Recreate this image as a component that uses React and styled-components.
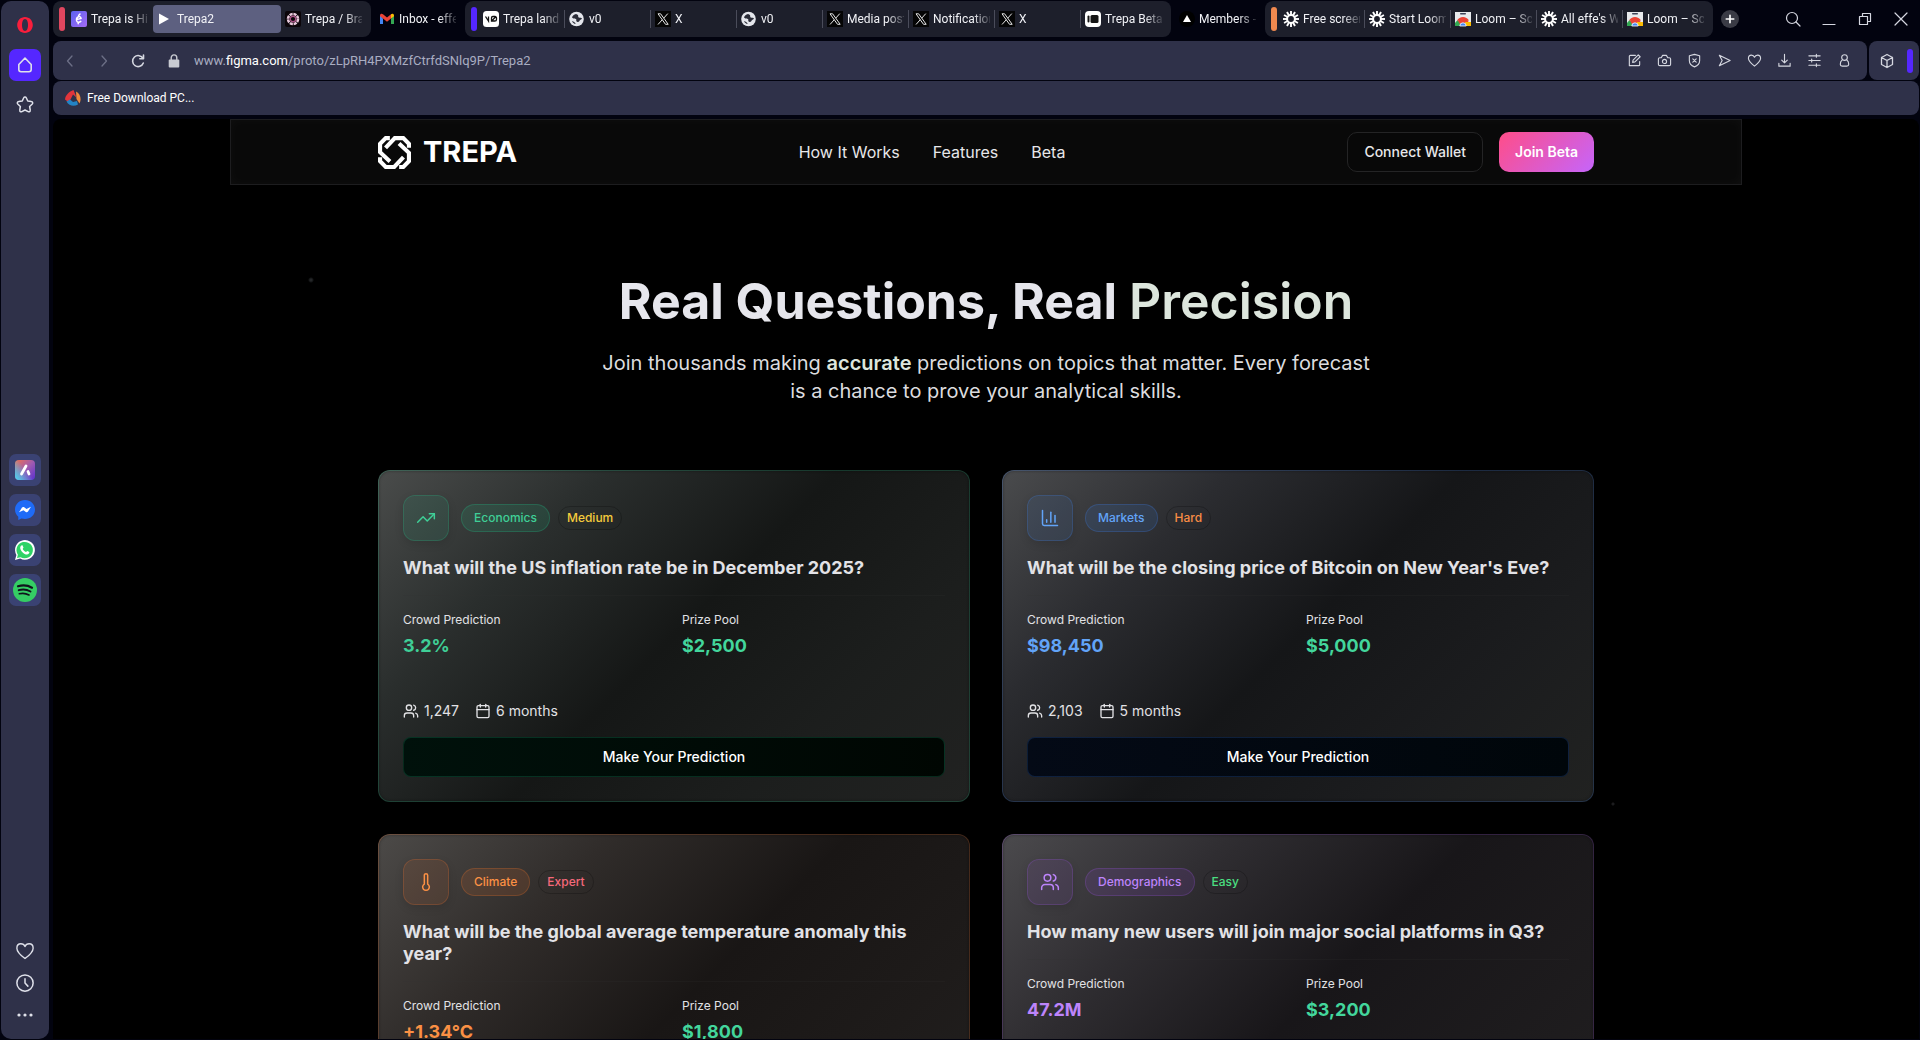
import React from "react";
import styled, { createGlobalStyle, css } from "styled-components";
import {
  Calendar,
  ChartColumn,
  Thermometer,
  TrendingUp,
  Users,
} from "lucide-react";

const GlobalStyle = createGlobalStyle`
  * { box-sizing: border-box; }
  body {
    margin: 0;
    background: #02030f;
    font-family: Inter, "Liberation Sans", sans-serif;
  }
  button { font: inherit; color: inherit; border: 0; padding: 0; background: none; cursor: pointer; }
  a { color: inherit; text-decoration: none; }
  h1, h2, p, dl, dd { margin: 0; }
  svg { display: block; flex: none; }
`;

/* ---------- browser chrome ---------- */

const Window = styled.div`
  display: flex;
  gap: 4px;
  height: 100vh;
  padding: 1px;
  overflow: hidden;
`;

const Sidebar = styled.nav`
  display: flex;
  flex-direction: column;
  align-items: center;
  width: 48px;
  flex: none;
  padding: 8px 0 12px;
  border-radius: 10px;
  background: #2f3149;
  color: #dfe1ea;
`;

const SideGroup = styled.div`
  display: flex;
  flex-direction: column;
  align-items: center;
  gap: 8px;
  margin-top: ${(p) => (p.$push ? "auto" : 0)};
`;

const SideButton = styled.button`
  display: grid;
  place-items: center;
  width: 32px;
  height: ${(p) => (p.$short ? 24 : 32)}px;
  border-radius: 7px;
  background: ${(p) => (p.$active ? "#5527ff" : p.$tile ? "#3a4273" : "none")};
`;

const Main = styled.div`
  display: flex;
  flex-direction: column;
  flex: 1;
  min-width: 0;
  font-family: Roboto, "Noto Sans", sans-serif;
`;

const TabStrip = styled.div`
  display: flex;
  align-items: center;
  gap: 4px;
  height: 36px;
  flex: none;
`;

const TabGroup = styled.div`
  display: flex;
  align-items: center;
  height: 36px;
  flex: none;
  padding: ${(p) => (p.$color ? "0 4px 0 6px" : 0)};
  border-radius: 8px;
  background: ${(p) => (p.$color ? "#1d1f2b" : "none")};
`;

const GroupBar = styled.span`
  width: 6px;
  height: 24px;
  margin-right: 2px;
  border-radius: 3px;
  background: ${(p) => p.$color};
`;

const Tab = styled.button`
  display: flex;
  align-items: center;
  gap: 4px;
  width: 86px;
  height: 18px;
  padding: 0 4px;
  color: #f1f2f6;
  font-size: 12px;
  line-height: 18px;
  text-align: left;
  border-right: 1px solid ${(p) => (p.$divided ? "#4a4c5a" : "transparent")};
  ${(p) =>
    p.$active &&
    css`
      width: 128px;
      height: 28px;
      border-radius: 4px;
      background: #5d6080;
    `}
`;

const TabTitle = styled.span`
  flex: 1;
  min-width: 0;
  overflow: hidden;
  white-space: nowrap;
  mask-image: linear-gradient(to right, #000 70%, transparent 105%);
`;

const NewTab = styled.button`
  display: grid;
  place-items: center;
  width: 18px;
  height: 18px;
  margin-left: 4px;
  border-radius: 50%;
  background: #3a3b45;
  color: #fff;
`;

const WindowControls = styled.div`
  display: flex;
  align-items: center;
  gap: 16px;
  margin-left: auto;
  padding-right: 8px;
  color: #e9eaf2;
`;

const IconButton = styled.button`
  display: grid;
  place-items: center;
  width: 20px;
  height: 20px;
  color: ${(p) => (p.$dim ? "#6c6f86" : "#d5d7e0")};
`;

const BarRow = styled.div`
  display: flex;
  gap: 2px;
  margin-top: 4px;
  flex: none;
`;

const Panel = styled.div`
  display: flex;
  align-items: center;
  height: 39px;
  border-radius: 8px;
  background: #2f3149;
`;

const AddressPanel = styled(Panel)`
  flex: 1;
  min-width: 0;
  padding: 0 13px 0 7px;
`;

const History = styled.div`
  display: flex;
  align-items: center;
  gap: 14px;
  margin-right: 20px;
`;

const Address = styled.div`
  flex: 1;
  min-width: 0;
  margin-left: 14px;
  overflow: hidden;
  white-space: nowrap;
  font-size: 13px;
  line-height: 20px;
  color: #a9adc1;
  outline: 0;
  b { font-weight: 400; color: #fff; }
`;

const Actions = styled.div`
  display: flex;
  align-items: center;
  gap: 10px;
`;

const ExtensionPanel = styled(Panel)`
  width: 50px;
  gap: 10px;
  padding-left: 8px;
`;

const PanelMarker = styled.span`
  width: 6px;
  height: 24px;
  border-radius: 3px;
  background: #5527ff;
`;

const Bookmarks = styled(Panel)`
  height: 34px;
  margin-top: 1px;
  padding: 0 12px;
  flex: none;
`;

const Bookmark = styled.a`
  display: flex;
  align-items: center;
  gap: 6px;
  color: #fff;
  font-size: 12px;
  line-height: 18px;
`;

/* ---------- page ---------- */

const Viewport = styled.div`
  flex: 1;
  min-height: 0;
  margin-top: 4px;
  overflow-y: auto;
  scrollbar-width: none;
  border-radius: 8px 8px 0 0;
  font-family: Inter, "Liberation Sans", sans-serif;
  color: #e7e7ea;
  background: #000;
`;

const Page = styled.div`
  max-width: 1512px;
  margin: 0 auto;
  background:
    radial-gradient(circle at 81px 161px, #242628 1px, transparent 3px),
    radial-gradient(circle at 1383px 685px, #1c1c1e 1px, transparent 2px);
`;

const Header = styled.header`
  height: 66px;
  padding: 0 16px;
  border: 1px solid #1d1d1f;
  background: #090909;
  box-shadow: inset 0 0 12px rgba(255, 255, 255, 0.03);
`;

const Container = styled.div`
  max-width: 1216px;
  margin: 0 auto;
`;

const HeaderRow = styled(Container)`
  display: grid;
  grid-template-columns: 1fr auto 1fr;
  align-items: center;
  height: 100%;
`;

const Brand = styled.a`
  display: flex;
  align-items: center;
  gap: 12px;
  color: #fff;
  font-size: 29px;
  font-weight: 700;
  line-height: 32px;
`;

const Nav = styled.nav`
  display: flex;
  gap: 33px;
  margin-right: 108px;
  font-size: 16px;
  line-height: 24px;
`;

const HeaderActions = styled.div`
  display: flex;
  justify-content: flex-end;
  gap: 16px;
`;

const HeaderButton = styled.button`
  height: 40px;
  padding: 0 16px;
  border-radius: 10px;
  font-size: 14px;
  font-weight: 500;
  line-height: 20px;
  white-space: nowrap;
  ${(p) =>
    p.$primary
      ? css`
          color: #fff;
          font-weight: 600;
          background: linear-gradient(135deg, #ff4d88, #c565fb);
        `
      : css`
          border: 1px solid #242425;
          background: #080808;
        `}
`;

const Hero = styled.section`
  padding: 84px 16px 65px;
  text-align: center;
`;

const HeroTitle = styled.h1`
  font-size: 50px;
  font-weight: 700;
  line-height: 64px;
  color: #e6e6ec;
  span { font-weight: 600; color: #dde6dd; }
`;

const HeroText = styled.p`
  max-width: 780px;
  margin: 16px auto 0;
  font-size: 20px;
  font-weight: 400;
  line-height: 28px;
  color: #dcdcdf;
  b { font-weight: 600; color: #dde6dd; }
`;

const CardGrid = styled(Container)`
  display: grid;
  grid-template-columns: 1fr 1fr;
  gap: 32px;
  padding-bottom: 64px;
`;

const Card = styled.article`
  display: flex;
  flex-direction: column;
  padding: 24px;
  border: 1px solid rgba(${(p) => p.$rgb}, 0.2);
  border-radius: 12px;
  background: linear-gradient(135deg, ${(p) => p.$shades}) border-box;
  box-shadow: inset 0 0 3px rgba(0, 0, 0, 0.35);
`;

const Tags = styled.div`
  display: flex;
  align-items: center;
  gap: 8px;
`;

const CardIcon = styled.div`
  display: grid;
  place-items: center;
  width: 46px;
  height: 46px;
  margin-right: 4px;
  border: 1px solid rgba(${(p) => p.$rgb}, 0.24);
  border-radius: 12px;
  color: ${(p) => p.$color};
  background: rgba(${(p) => p.$rgb}, 0.1);
  box-shadow: 0 3px 8px rgba(0, 0, 0, 0.12);
`;

const Category = styled.span`
  padding: 5px 12px;
  border: 1px solid rgba(${(p) => p.$rgb}, 0.25);
  border-radius: 15px;
  color: ${(p) => p.$color};
  background: rgba(${(p) => p.$rgb}, 0.14);
  font-size: 12px;
  font-weight: 500;
  line-height: 16px;
`;

const Level = styled.span`
  padding: 3px 8px;
  border: 1px solid rgba(0, 0, 0, 0.22);
  border-radius: 12px;
  color: ${(p) => p.$color};
  font-size: 12px;
  font-weight: 500;
  line-height: 16px;
`;

const Question = styled.h2`
  margin-top: 16px;
  padding-bottom: 16px;
  border-bottom: 1px solid rgba(48, 52, 52, 0.2);
  color: #e2e2e6;
  font-size: 18px;
  font-weight: 700;
  line-height: 22px;
`;

const Figures = styled.dl`
  display: grid;
  grid-template-columns: 1fr 1fr;
  gap: 16px;
  margin-top: 16px;
  dt { font-size: 12px; line-height: 16px; color: #e2e2e5; }
`;

const Value = styled.dd`
  padding-top: 4px;
  color: ${(p) => p.$color};
  font-size: 18px;
  font-weight: 700;
  line-height: 28px;
`;

const Stats = styled.div`
  display: flex;
  gap: 16px;
  margin-top: auto;
  padding-top: 40px;
`;

const Stat = styled.span`
  display: flex;
  align-items: center;
  gap: 5px;
  color: #e2e2e5;
  font-size: 14px;
  line-height: 21px;
`;

const PredictButton = styled.button`
  width: 100%;
  height: 40px;
  margin-top: 16px;
  border: 1px solid rgba(${(p) => p.$rgb}, 0.2);
  border-radius: 8px;
  color: #fff;
  background: linear-gradient(to right, ${(p) => p.$from}, ${(p) => p.$to});
  font-size: 14px;
  font-weight: 500;
  line-height: 20px;
`;

/* ---------- drawings ---------- */

const Line = ({ size = 16, width = 1.3, children }) => (
  <svg width={size} height={size} viewBox="0 0 16 16" fill="none" stroke="currentColor" strokeWidth={width} strokeLinecap="round" strokeLinejoin="round" aria-hidden="true">
    {children}
  </svg>
);

const Fav = ({ children }) => (
  <svg width="16" height="16" viewBox="0 0 16 16" aria-hidden="true">{children}</svg>
);

const spokes = Array.from({ length: 12 }, (_, i) => i * 30);

const favicons = {
  himalayas: (
    <Fav>
      <defs><linearGradient id="fh" x1="0" y1="0" x2="1" y2="1"><stop stopColor="#5b62f0" /><stop offset="1" stopColor="#a56bf5" /></linearGradient></defs>
      <rect width="16" height="16" rx="2" fill="url(#fh)" />
      <path d="M5.500 8.600 10 7.400C9.800 5.800 8.600 5.400 7.500 5.700 5.900 6.200 5.300 8 5.600 9.600c.4 1.900 2.600 2.200 4.200.8M9 3 7.600 4.500M7.200 12.800v-1" fill="none" stroke="#fff" strokeWidth="1.500" strokeLinecap="round" />
    </Fav>
  ),
  play: <Fav><path d="M2 2.500v11L12 8z" fill="#fff" /></Fav>,
  brand: (
    <Fav>
      <rect width="16" height="16" rx="2" fill="#0b0509" />
      <circle cx="8" cy="8" r="5" fill="none" stroke="#e9c9dc" strokeWidth="2.600" strokeDasharray="3.100 .8" />
      <circle cx="8" cy="8" r="2.800" fill="none" stroke="#a55283" strokeWidth="1.400" />
    </Fav>
  ),
  gmail: (
    <Fav>
      <path d="M1 4v9h3V7.500z" fill="#4285f4" />
      <path d="M15 4v9h-3V7.500z" fill="#34a853" />
      <path d="M1 4.300C1 2.500 3 2.300 4 3.200l4 3.200 4-3.200v4.300l-4 3.200-4-3.200-3-2.300z" fill="#ea4335" />
      <path d="M12 3.200c1-.9 3-.7 3 1.100v.9l-3 2.300z" fill="#fbbc04" />
    </Fav>
  ),
  vzero: (
    <Fav>
      <rect width="16" height="16" rx="3.500" fill="#fff" />
      <path d="M2.500 5.500 5.500 10V5.500M8.500 10h3.200c1 0 1.800-.7 1.800-1.600V7c0-.9-.7-1.500-1.600-1.500H9.800C9 5.500 8.500 6 8.500 7zM8.800 9.800l4-4" fill="none" stroke="#111" strokeWidth="1.300" />
    </Fav>
  ),
  globe: (
    <Fav>
      <circle cx="7.500" cy="8" r="7.300" fill="#e4e6ec" />
      <path d="M7 3c-2 .2-3.500 1.700-4 3.400 1.300 1.600 3 .9 4 1.600.8.7-.2 1.700.6 2.600.7.800 2.200.4 2.800-.7.500-1 1.800-1.300 2.600-2.200-.5-1.300-2-.7-3.200-1.200C8.500 6 9.800 5.200 9 4.200 8.500 3.500 7.800 3.600 7 3zM3 10c.7 1.800 2 2.800 3.600 3.100C6.600 11.600 4.700 10.800 3 10z" fill="#2a2c38" />
    </Fav>
  ),
  x: (
    <Fav>
      <rect width="16" height="16" fill="#050505" />
      <path d="M3 2.800h2.600l7.600 10.500h-2.700zM12.800 2.600 8.700 7.200M3 13.500l4.300-4.800" fill="none" stroke="#e6e6e6" />
    </Fav>
  ),
  beta: (
    <Fav>
      <rect width="16" height="16" rx="4" fill="#fff" />
      <rect x="2.500" y="4.500" width="2" height="7" rx="1" fill="#151515" />
      <rect x="5.500" y="4" width="8" height="8" rx="1.500" fill="#151515" />
    </Fav>
  ),
  vercel: <Fav><circle cx="8" cy="8" r="8" fill="#000" /><path d="m8 4 4 7H4z" fill="#fff" /></Fav>,
  loom: (
    <Fav>
      {spokes.map((a) => (
        <path key={a} d="M8 0v4.500" stroke="#fff" strokeWidth="1.900" transform={`rotate(${a} 8 8)`} />
      ))}
      <circle cx="8" cy="8" r="3.900" fill="none" stroke="#fff" strokeWidth="2" />
    </Fav>
  ),
  store: (
    <Fav>
      <path d="M0 1h16v14H0z" fill="#e8eaed" />
      <rect x="5" y="2" width="6" height="1.500" rx=".7" fill="#3f4358" />
      <path d="M1.500 15a6.500 8 0 0 1 13 0z" fill="#ea4335" />
      <path d="M0 15v-3l2.500-3L6 15z" fill="#34a853" />
      <path d="M16 15v-4l-6 0V15z" fill="#fbbc04" />
      <path d="M2 9.500a7 7 0 0 1 12 0z" fill="#ea4335" />
      <path d="M4.800 15a3.200 3.200 0 0 1 6.400 0z" fill="#4285f4" stroke="#fff" strokeWidth=".8" />
    </Fav>
  ),
};

const TrepaMark = () => (
  <svg width="33" height="33" viewBox="0 0 32 32" fill="none" stroke="#fff" strokeWidth="4" aria-hidden="true">
    {[0, 90, 180, 270].map((a) => (
      <path key={a} d="M7.300 11.600 16.300 2H24.500L30 7.500V11.500" transform={`rotate(${a} 16 16)`} />
    ))}
  </svg>
);

/* ---------- data ---------- */

const tabGroups = [
  { color: "#e0475f", tabs: [["himalayas", "Trepa is Hiring"], ["play", "Trepa2", true], ["brand", "Trepa / Brand"]] },
  { tabs: [["gmail", "Inbox - effe@gm"]] },
  {
    color: "#5527ff",
    tabs: [["vzero", "Trepa landing"], ["globe", "v0"], ["x", "X"], ["globe", "v0"], ["x", "Media posts"], ["x", "Notifications"], ["x", "X"], ["beta", "Trepa Beta"]],
  },
  { tabs: [["vercel", "Members - eff"]] },
  {
    color: "#f0894f",
    tabs: [["loom", "Free screen r"], ["loom", "Start Loom"], ["store", "Loom – Screen"], ["loom", "All effe's Wor"], ["store", "Loom – Screen"]],
  },
];

const green = "#43d69c";

const cards = [
  {
    icon: TrendingUp, category: "Economics", level: "Medium", levelColor: "#f5cb3c",
    color: "#3fcf97", rgb: "32, 190, 135", shades: "#4a4c4b, #2a2e2d 25%, #151716 50%, #1c1e1d 75%, #212221",
    from: "#00110b", to: "#000602",
    question: "What will the US inflation rate be in December 2025?",
    crowd: "3.2%", prize: "$2,500", people: "1,247", time: "6 months",
  },
  {
    icon: ChartColumn, category: "Markets", level: "Hard", levelColor: "#f98d45",
    color: "#62a4f8", rgb: "59, 125, 230", shades: "#4a4b4d, #2b2c30 25%, #151618 50%, #1b1c1e 75%, #212221",
    from: "#040a16", to: "#00060a",
    question: "What will be the closing price of Bitcoin on New Year's Eve?",
    crowd: "$98,450", prize: "$5,000", people: "2,103", time: "5 months",
  },
  {
    icon: Thermometer, category: "Climate", level: "Expert", levelColor: "#f5697a",
    color: "#fb9044", rgb: "235, 110, 40", shades: "#4c4a48, #302c2a 25%, #191615 50%, #1e1b1a 75%, #222120",
    from: "#140800", to: "#080200",
    question: "What will be the global average temperature anomaly this year?",
    crowd: "+1.34°C", prize: "$1,800", people: "892", time: "12 months",
  },
  {
    icon: Users, category: "Demographics", level: "Easy", levelColor: "#4ade80",
    color: "#bd84fb", rgb: "150, 80, 220", shades: "#4b4a4d, #2f2d31 25%, #181619 50%, #1d1b1d 75%, #222021",
    from: "#0c0414", to: "#060008",
    question: "How many new users will join major social platforms in Q3?",
    crowd: "47.2M", prize: "$3,200", people: "1,856", time: "3 months",
  },
];

/* ---------- parts ---------- */

const PredictionCard = ({ card }) => {
  const Icon = card.icon;
  return (
    <Card $rgb={card.rgb} $shades={card.shades}>
      <Tags>
        <CardIcon $rgb={card.rgb} $color={card.color}><Icon size={20} strokeWidth={1.8} /></CardIcon>
        <Category $rgb={card.rgb} $color={card.color}>{card.category}</Category>
        <Level $color={card.levelColor}>{card.level}</Level>
      </Tags>
      <Question>{card.question}</Question>
      <Figures>
        <div><dt>Crowd Prediction</dt><Value $color={card.color}>{card.crowd}</Value></div>
        <div><dt>Prize Pool</dt><Value $color={green}>{card.prize}</Value></div>
      </Figures>
      <Stats>
        <Stat><Users size={16} strokeWidth={2} />{card.people}</Stat>
        <Stat><Calendar size={16} strokeWidth={2} />{card.time}</Stat>
      </Stats>
      <PredictButton $rgb={card.rgb} $from={card.from} $to={card.to}>Make Your Prediction</PredictButton>
    </Card>
  );
};

const BrowserSidebar = () => (
  <Sidebar aria-label="Browser sidebar">
    <SideGroup>
      <SideButton aria-label="Opera menu">
        <svg width="18" height="18" viewBox="0 0 18 18"><path fillRule="evenodd" fill="#fa1e3c" d="M9 1C4.600 1 1.200 4.600 1.200 9S4.600 17 9 17s7.800-3.600 7.800-8S13.400 1 9 1zm0 2c2 0 3 2.800 3 6s-1 6-3 6-3-2.800-3-6 1-6 3-6z" /></svg>
      </SideButton>
      <SideButton $active aria-label="Home"><Line size={18} width={1.4}><path d="M2.500 7.500 8 1.800l5.500 5.700V12a2 2 0 0 1-2 2h-7a2 2 0 0 1-2-2z" /></Line></SideButton>
      <SideButton aria-label="Speed dial">
        <Line size={20} width={1.200}><path d="M7 2.200c.4-.9 1.600-.9 2 0l1.200 2.600 2.900.4c1 .1 1.400 1.300.7 2l-2.100 2 .5 2.900c.2 1-.8 1.700-1.700 1.200L8 12l-2.500 1.300c-.9.500-1.900-.2-1.700-1.200l.5-2.900-2.100-2c-.7-.7-.3-1.900.7-2l2.900-.4z" /></Line>
      </SideButton>
    </SideGroup>
    <SideGroup $push>
      <SideButton $tile aria-label="Aria">
        <svg width="20" height="20" viewBox="0 0 20 20">
          <defs>
            <linearGradient id="ar" x1="0" y1="0" x2="1" y2="1"><stop stopColor="#f0714f" /><stop offset=".5" stopColor="#a05bb0" /><stop offset="1" stopColor="#5a2fd0" /></linearGradient>
            <linearGradient id="ac" x1="0" y1=".8" x2=".5" y2=".4"><stop stopColor="#54c8e8" /><stop offset="1" stopColor="#54c8e8" stopOpacity="0" /></linearGradient>
          </defs>
          <rect width="20" height="20" rx="4" fill="url(#ar)" /><rect width="20" height="20" rx="4" fill="url(#ac)" />
          <path d="M11 6 6.500 14M13 11.500l1 2.500" stroke="#fff" strokeWidth="2.800" strokeLinecap="round" />
        </svg>
      </SideButton>
      <SideButton $tile aria-label="Messenger">
        <svg width="20" height="20" viewBox="0 0 20 20"><path d="M10 0C4.400 0 0 4.100 0 9.600c0 3 1.300 5.400 3.300 7.100V20l3.200-1.400c1.100.3 2.200.5 3.500.5 5.600 0 10-4.100 10-9.500S15.600 0 10 0z" fill="#1f6bf7" /><path d="m4 12.300 3-4.700c.5-.8 1.500-.9 2.200-.4l2.300 1.700L16 6.800l-3 4.700c-.5.8-1.500.9-2.200.4L8.500 10.300z" fill="#fff" /></svg>
      </SideButton>
      <SideButton $tile aria-label="WhatsApp">
        <svg width="20" height="20" viewBox="0 0 20 20"><path d="M0 20l1.400-5.100A9.900 9.900 0 1 1 5.200 18.600z" fill="#fff" /><path d="m2 18 .9-3.300a8.200 8.200 0 1 1 2.700 2.500z" fill="#2fd366" /><path d="M7 5.300c.5 0 .6.100.8.600l.7 1.700c0 .4-.9 1.100-.8 1.500.7 1.400 1.800 2.300 3.300 3 .4 0 1-1.100 1.400-1l1.900 1c.3.400-.2 2.400-2.200 2.500C9 14.500 5.200 10.500 5.200 7.700 5.300 6.300 6.200 5.300 7 5.300z" fill="#fff" /></svg>
      </SideButton>
      <SideButton $tile aria-label="Spotify">
        <svg width="24" height="24" viewBox="0 0 24 24" fill="none" stroke="#10131c" strokeLinecap="round"><circle cx="12" cy="12" r="12" fill="#35cd64" stroke="none" /><path d="M5 8.300c4.700-1.400 10-.9 14 1.400" strokeWidth="2.200" /><path d="M5.700 12.200c4-1.200 8.300-.7 11.800 1.300" strokeWidth="1.900" /><path d="M6.300 15.800c3.400-.9 6.700-.5 9.700 1.200" strokeWidth="1.600" /></svg>
      </SideButton>
    </SideGroup>
    <SideGroup $push>
      <SideButton $short aria-label="Favourites"><Line size={20} width={1.1}><path d="M8 14C4 11 1.500 8.700 1.500 5.700 1.500 3.500 3 2.200 4.700 2.200S7.500 3.200 8 4.500c.5-1.300 1.600-2.300 3.300-2.300s3.200 1.300 3.200 3.500C14.500 8.700 12 11 8 14z" /></Line></SideButton>
      <SideButton $short aria-label="History"><Line size={20} width={1.200}><circle cx="8" cy="8" r="6.500" /><path d="M8 4.500V8l2.300 2.500" /></Line></SideButton>
      <SideButton $short aria-label="More"><svg width="18" height="4" viewBox="0 0 18 4" fill="currentColor"><circle cx="3" cy="2" r="1.600" /><circle cx="9" cy="2" r="1.600" /><circle cx="15" cy="2" r="1.600" /></svg></SideButton>
    </SideGroup>
  </Sidebar>
);

const actions = [
  ["Edit page", <><path d="M9 2.500H3.500a1 1 0 0 0-1 1v10h10a1 1 0 0 0 1-1V9" /><path d="m6 10 .5-2.500L12 2l2 2-5.500 5.500z" /></>],
  ["Snapshot", <><path d="M4.500 5 6 2.500h4L11.500 5H13a1.500 1.500 0 0 1 1.500 1.500V12a1.500 1.500 0 0 1-1.500 1.500H3A1.500 1.500 0 0 1 1.500 12V6.500A1.500 1.500 0 0 1 3 5z" /><circle cx="8" cy="9" r="2.200" /></>],
  ["Ad blocker", <><path d="M8 1.500 13.500 3v5c0 3.500-2 5.500-5.500 6.800C4.500 13.500 2.500 11.500 2.500 8V3z" /><path d="m6.200 6.200 3.600 3.600M9.800 6.200 6.200 9.800" /></>],
  ["Share", <path d="M2.500 2.500 14 8 2.500 13.500 5.500 8z" />],
  ["Favourite", <path d="M8 14C4 11 1.500 8.700 1.500 5.700 1.500 3.500 3 2.200 4.700 2.200S7.500 3.200 8 4.500c.5-1.300 1.600-2.300 3.300-2.300s3.200 1.300 3.200 3.500C14.500 8.700 12 11 8 14z" />],
  ["Downloads", <path d="M8 1.500v9M5 7.500l3 3 3-3M2 11v3h12v-3" />],
  ["Easy setup", <path d="M2 3h12M2 8h12M2 13h12M10 1.500v3M5 6.500v3M10 11.500v3" />],
  ["Profile", <><circle cx="8" cy="4.800" r="3" /><path d="M5.500 7.500C4 8.500 3.500 10 3.500 12c0 1.500.8 2 2 2h5c1.200 0 2-.5 2-2 0-2-.5-3.500-2-4.500" /></>],
];

export default function App() {
  return (
    <>
      <GlobalStyle />
      <Window>
        <BrowserSidebar />
        <Main>
          <TabStrip>
            {tabGroups.map((group, g) => (
              <TabGroup key={g} $color={group.color}>
                {group.color && <GroupBar $color={group.color} />}
                {group.tabs.map(([icon, title, active], i) => (
                  <Tab key={i} $active={active} $divided={group.tabs.length > 3 && i < group.tabs.length - 1}>
                    {favicons[icon]}
                    <TabTitle>{title}</TabTitle>
                  </Tab>
                ))}
              </TabGroup>
            ))}
            <NewTab aria-label="New tab"><Line size={12} width={2.200}><path d="M8 3v10M3 8h10" /></Line></NewTab>
            <WindowControls>
              <IconButton aria-label="Search tabs"><Line width={1.200}><circle cx="7" cy="7" r="5.500" /><path d="m11 11 4 4" /></Line></IconButton>
              <IconButton aria-label="Minimize"><Line width={1.200}><path d="M2 13.500h12" /></Line></IconButton>
              <IconButton aria-label="Restore"><Line width={1.200}><path d="M2.500 5.500h8v8h-8zM5.500 5.500v-3h8v8h-3" /></Line></IconButton>
              <IconButton aria-label="Close"><Line width={1.200}><path d="m2 2 12 12M14 2 2 14" /></Line></IconButton>
            </WindowControls>
          </TabStrip>
          <BarRow>
            <AddressPanel>
              <History>
                <IconButton $dim aria-label="Back"><Line><path d="M10 3 5.500 8l4.500 5" /></Line></IconButton>
                <IconButton $dim aria-label="Forward"><Line><path d="m6 3 4.500 5L6 13" /></Line></IconButton>
                <IconButton aria-label="Reload"><Line width={1.600}><path d="M13 5.500A5.500 5.500 0 1 0 13.300 10M13.500 2v3.800H9.800" /></Line></IconButton>
              </History>
              <svg width="12" height="14" viewBox="0 0 12 14" aria-hidden="true"><path d="M3.200 6V3.700a2.800 2.800 0 0 1 5.600 0V6" fill="none" stroke="#c9cbd2" strokeWidth="1.400" /><rect x=".7" y="5.500" width="10.600" height="8" rx="1" fill="#c9cbd2" /></svg>
              <Address role="textbox" aria-label="Address" contentEditable suppressContentEditableWarning spellCheck={false}>
                www.<b>figma.com</b>/proto/zLpRH4PXMzfCtrfdSNlq9P/Trepa2
              </Address>
              <Actions>
                {actions.map(([label, shape]) => (
                  <IconButton key={label} aria-label={label}><Line size={15} width={1.200}>{shape}</Line></IconButton>
                ))}
              </Actions>
            </AddressPanel>
            <ExtensionPanel>
              <IconButton aria-label="Extensions"><Line><path d="m8 1.500 5.500 3v7L8 14.500l-5.500-3v-7zM2.500 4.500 8 7.500l5.500-3M8 7.500v7" /></Line></IconButton>
              <PanelMarker />
            </ExtensionPanel>
          </BarRow>
          <Bookmarks>
            <Bookmark href="#">
              <Fav><path d="M8.500 0C4 1.500.5 5 0 9.500l4 3L8 4.500l3.500 3z" fill="#e2353b" /><path d="M11 1.500c4 2 6 7 3.500 12L11.500 9z" fill="#f08a3c" /><path d="M1.500 11.500 5 9.500l3 2.500 4-1 1 3.500C9 17 4 16 1.500 11.500z" fill="#2383c4" /></Fav>
              Free Download PC...
            </Bookmark>
          </Bookmarks>
          <Viewport>
            <Page>
              <Header>
                <HeaderRow>
                  <Brand href="#"><TrepaMark />TREPA</Brand>
                  <Nav>
                    <a href="#how">How It Works</a>
                    <a href="#features">Features</a>
                    <a href="#beta">Beta</a>
                  </Nav>
                  <HeaderActions>
                    <HeaderButton>Connect Wallet</HeaderButton>
                    <HeaderButton $primary>Join Beta</HeaderButton>
                  </HeaderActions>
                </HeaderRow>
              </Header>
              <Hero>
                <HeroTitle>Real Questions, Real <span>Precision</span></HeroTitle>
                <HeroText>
                  Join thousands making <b>accurate</b> predictions on topics that matter. Every forecast is a chance to prove your analytical skills.
                </HeroText>
              </Hero>
              <CardGrid>
                {cards.map((card) => <PredictionCard key={card.category} card={card} />)}
              </CardGrid>
            </Page>
          </Viewport>
        </Main>
      </Window>
    </>
  );
}
